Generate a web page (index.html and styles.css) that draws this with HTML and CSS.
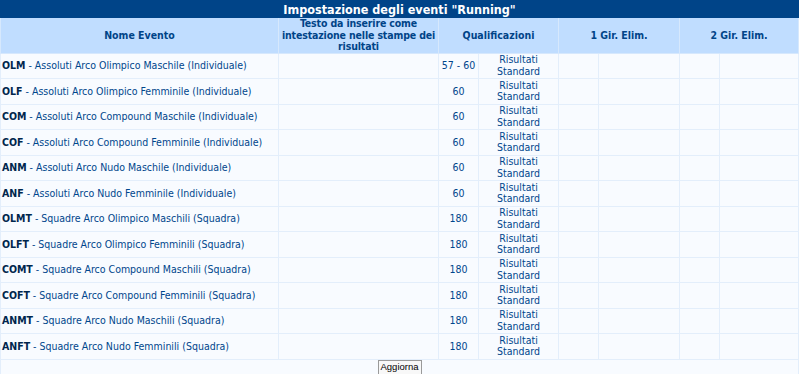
FILE: index.html
```html
<!DOCTYPE html>
<html>
<head>
<meta charset="utf-8">
<link rel="stylesheet" href="styles.css">
</head>
<body>
<table class="grid">
<colgroup>
<col class="c-name"><col class="c-text"><col class="c-qa"><col class="c-qb"><col class="c-ga"><col class="c-gb"><col class="c-ha"><col class="c-hb">
</colgroup>
<thead>
<tr class="title"><th colspan="8">Impostazione degli eventi "Running"</th></tr>
<tr class="head">
<th>Nome Evento</th>
<th class="tight">Testo da inserire come intestazione nelle stampe dei risultati</th>
<th colspan="2">Qualificazioni</th>
<th colspan="2">1 Gir. Elim.</th>
<th colspan="2">2 Gir. Elim.</th>
</tr>
</thead>
<tbody>
<tr><td class="name"><b>OLM</b> - Assoluti Arco Olimpico Maschile (Individuale)</td><td></td><td class="num">57 - 60</td><td class="res">Risultati<br>Standard</td><td></td><td></td><td></td><td></td></tr>
<tr><td class="name"><b>OLF</b> - Assoluti Arco Olimpico Femminile (Individuale)</td><td></td><td class="num">60</td><td class="res">Risultati<br>Standard</td><td></td><td></td><td></td><td></td></tr>
<tr><td class="name"><b>COM</b> - Assoluti Arco Compound Maschile (Individuale)</td><td></td><td class="num">60</td><td class="res">Risultati<br>Standard</td><td></td><td></td><td></td><td></td></tr>
<tr><td class="name"><b>COF</b> - Assoluti Arco Compound Femminile (Individuale)</td><td></td><td class="num">60</td><td class="res">Risultati<br>Standard</td><td></td><td></td><td></td><td></td></tr>
<tr><td class="name"><b>ANM</b> - Assoluti Arco Nudo Maschile (Individuale)</td><td></td><td class="num">60</td><td class="res">Risultati<br>Standard</td><td></td><td></td><td></td><td></td></tr>
<tr><td class="name"><b>ANF</b> - Assoluti Arco Nudo Femminile (Individuale)</td><td></td><td class="num">60</td><td class="res">Risultati<br>Standard</td><td></td><td></td><td></td><td></td></tr>
<tr><td class="name"><b>OLMT</b> - Squadre Arco Olimpico Maschili (Squadra)</td><td></td><td class="num">180</td><td class="res">Risultati<br>Standard</td><td></td><td></td><td></td><td></td></tr>
<tr><td class="name"><b>OLFT</b> - Squadre Arco Olimpico Femminili (Squadra)</td><td></td><td class="num">180</td><td class="res">Risultati<br>Standard</td><td></td><td></td><td></td><td></td></tr>
<tr><td class="name"><b>COMT</b> - Squadre Arco Compound Maschili (Squadra)</td><td></td><td class="num">180</td><td class="res">Risultati<br>Standard</td><td></td><td></td><td></td><td></td></tr>
<tr><td class="name"><b>COFT</b> - Squadre Arco Compound Femminili (Squadra)</td><td></td><td class="num">180</td><td class="res">Risultati<br>Standard</td><td></td><td></td><td></td><td></td></tr>
<tr><td class="name"><b>ANMT</b> - Squadre Arco Nudo Maschili (Squadra)</td><td></td><td class="num">180</td><td class="res">Risultati<br>Standard</td><td></td><td></td><td></td><td></td></tr>
<tr><td class="name"><b>ANFT</b> - Squadre Arco Nudo Femminili (Squadra)</td><td></td><td class="num">180</td><td class="res">Risultati<br>Standard</td><td></td><td></td><td></td><td></td></tr>
<tr class="foot"><td colspan="8"><button class="btn" type="button">Aggiorna</button></td></tr>
</tbody>
</table>
</body>
</html>
```
FILE: styles.css
```css
html, body {
  margin: 0;
  padding: 0;
  background: #ffffff;
}
.grid {
  width: 798px;
  table-layout: fixed;
  border-collapse: collapse;
  font-family: "DejaVu Sans Condensed", "DejaVu Sans", sans-serif;
  font-size: 10.5px;
  color: #00468c;
}
.c-name { width: 278px; }
.c-text { width: 160px; }
.c-qa { width: 40px; }
.c-qb { width: 80px; }
.c-ga { width: 40px; }
.c-gb { width: 81px; }
.c-ha { width: 40px; }
.c-hb { width: 79px; }
.grid th, .grid td {
  border: 1px solid #e3eefb;
  padding: 0 1px;
}
.title th {
  background: #004488;
  color: #ffffff;
  font-size: 12.5px;
  font-weight: bold;
  height: 16px;
  line-height: 15px;
  padding: 0;
  border-color: #004488;
}
.head th {
  background: #c0ddff;
  color: #004488;
  font-weight: bold;
  line-height: 11.5px;
  height: 34px;
  padding: 0 2px;
  border-color: #d6e8fd;
  border-top-color: #c0ddff;
  vertical-align: middle;
}
.head th.tight {
  padding: 0;
  letter-spacing: -0.15px;
}
.grid td {
  background: #f8fbff;
  line-height: 11.5px;
  height: 24.5px;
  padding-top: 0;
  padding-bottom: 0;
  vertical-align: middle;
}
.name {
  padding-left: 2px;
  white-space: nowrap;
}
.name b {
  color: #00264d;
}
.num, .res {
  text-align: center;
}
.foot td {
  height: 15px;
  padding: 0;
  text-align: center;
  line-height: 14px;
}
.btn {
  font-family: "Liberation Sans", Arial, sans-serif;
  font-size: 9.5px;
  color: #000000;
  background: #f8f8f8;
  border: 1px solid #9a9a9a;
  padding: 0 2px;
  height: 15px;
  line-height: 12px;
  margin: 0;
  vertical-align: top;
}
```
